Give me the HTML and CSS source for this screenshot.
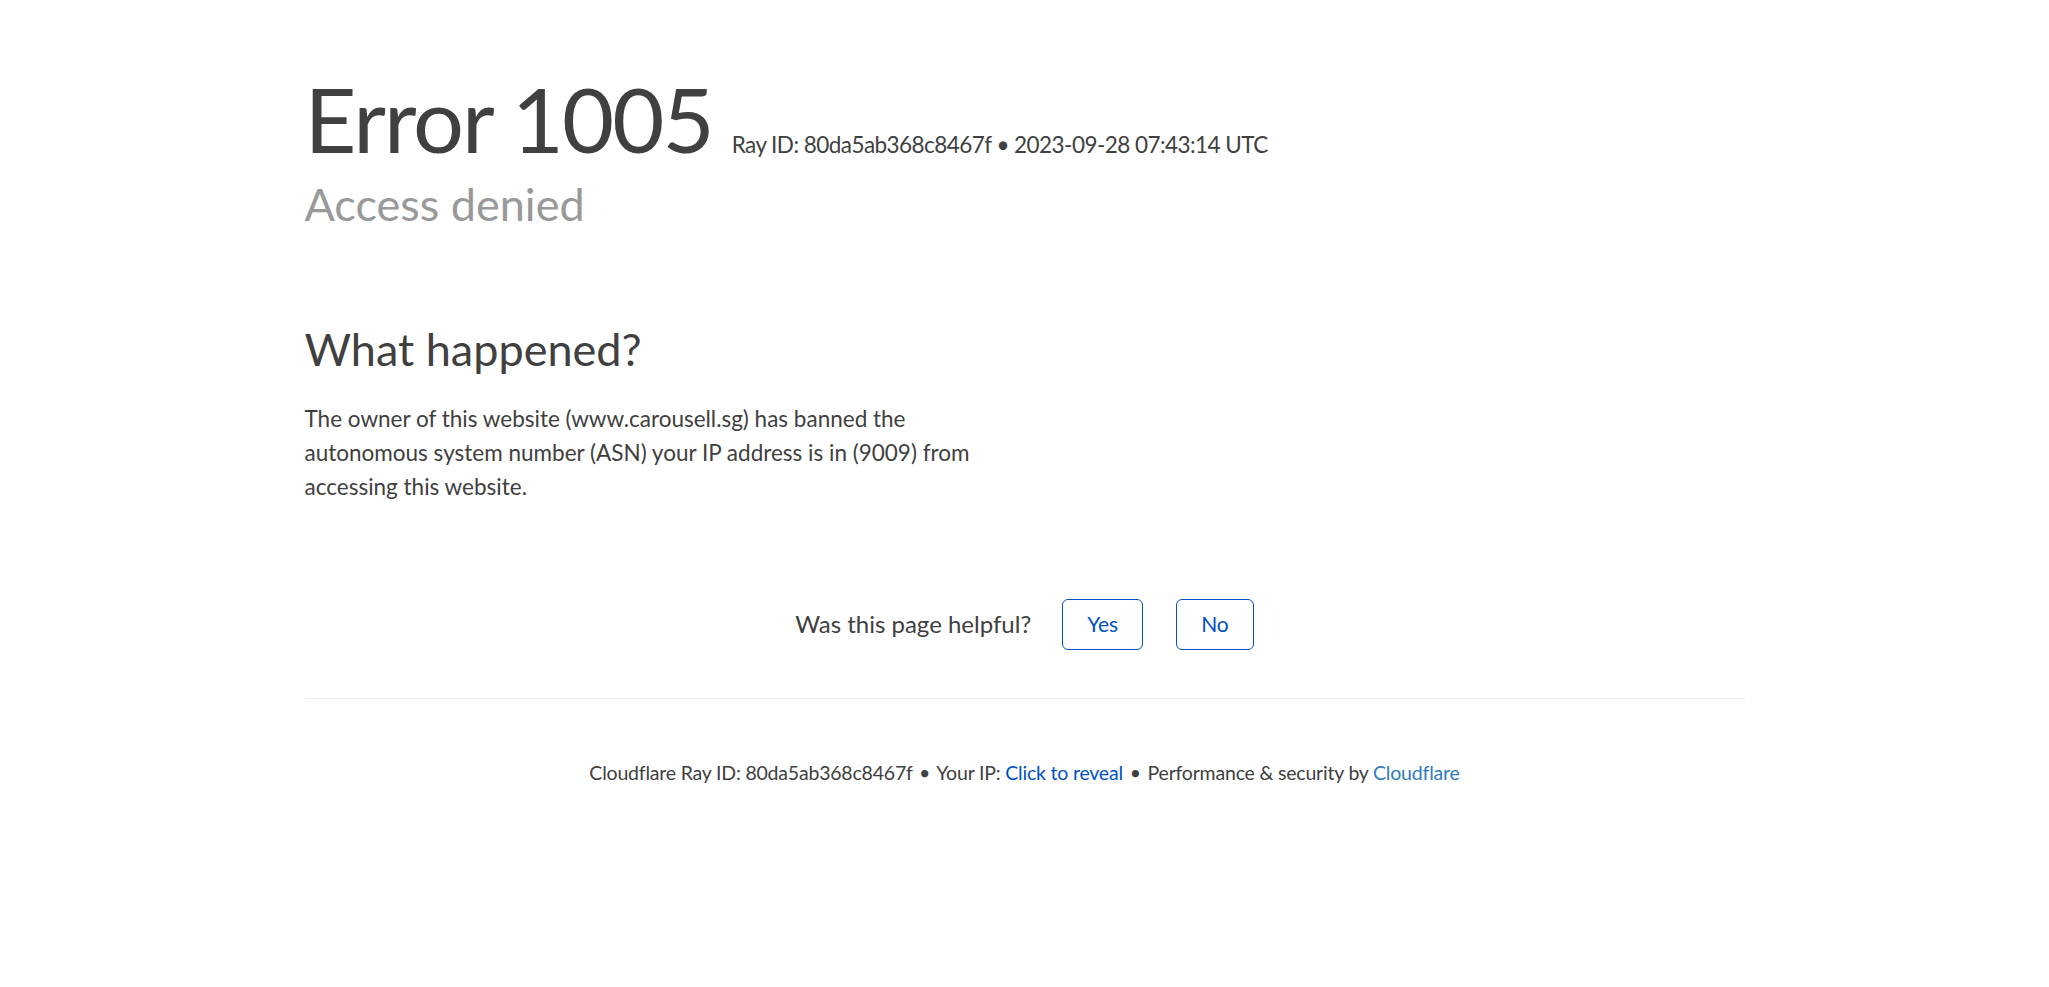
FILE: index.html
```html
<!DOCTYPE html>
<html lang="en">
<head>
<meta charset="utf-8">
<title>Access denied | www.carousell.sg used Cloudflare to restrict access</title>
<link rel="stylesheet" href="styles.css">
</head>
<body>
<div class="page">
  <header class="header">
    <div class="title-row">
      <h1 class="error-title"><span>Error</span> <span>1005</span></h1>
      <span class="ray-id">Ray ID: 80da5ab368c8467f &bull; 2023-09-28 07:43:14 UTC</span>
    </div>
    <h2 class="subheadline">Access denied</h2>
  </header>

  <section class="what-happened">
    <h2 class="section-title">What happened?</h2>
    <p class="section-text">The owner of this website (www.carousell.sg) has banned the autonomous system number (ASN) your IP address is in (9009) from accessing this website.</p>
  </section>

  <div class="feedback">
    <span class="feedback-label">Was this page helpful?</span>
    <div class="feedback-buttons">
      <button class="feedback-button" type="button">Yes</button>
      <button class="feedback-button" type="button">No</button>
    </div>
  </div>

  <footer class="footer">
    <span>Cloudflare Ray ID: <strong class="ray-strong">80da5ab368c8467f</strong></span>
    <span class="sep">&bull;</span>
    <span>Your IP: <a class="reveal-link" href="#">Click to reveal</a></span>
    <span class="sep">&bull;</span>
    <span>Performance &amp; security by <a class="cf-link" href="#">Cloudflare</a></span>
  </footer>
</div>
</body>
</html>
```

FILE: styles.css
```css
html, body {
  margin: 0;
  padding: 0;
  background: #ffffff;
}

body {
  font-family: "Lato", "Open Sans", "Liberation Sans", sans-serif;
  color: #404040;
  font-size: 22.5px;
  line-height: 1.5;
}

.page {
  width: 1440px;
  margin: 0 auto;
}

.header {
  padding-top: 62px;
}

.title-row {
  display: flex;
  align-items: baseline;
  gap: 19px;
}

.error-title {
  margin: 0;
  font-size: 90px;
  line-height: 1.25;
  font-weight: 400;
  letter-spacing: -2px;
  color: #404040;
}

.ray-id {
  font-size: 22.5px;
  letter-spacing: -0.55px;
  color: #404040;
}

.subheadline {
  margin: 0;
  font-size: 45px;
  line-height: 1.3;
  font-weight: 400;
  color: #999999;
}

.what-happened {
  margin-top: 88px;
  width: 720px;
}

.section-title {
  margin: 0 0 25px;
  font-size: 45px;
  line-height: 1.25;
  font-weight: 400;
  color: #404040;
}

.section-text {
  margin: 0;
  font-size: 22.5px;
  line-height: 1.5;
}

.feedback {
  padding: 48px 0;
  margin-top: 47px;
  display: flex;
  justify-content: center;
  align-items: center;
  gap: 31px;
}

.feedback-label {
  font-size: 24px;
}

.feedback-buttons {
  display: flex;
  gap: 33px;
}

.feedback-button {
  font-family: inherit;
  font-size: 21px;
  line-height: 24px;
  min-width: 77px;
  height: 51px;
  padding: 12px 24px;
  border: 1.5px solid #0051c3;
  border-radius: 6px;
  background: #ffffff;
  color: #0051c3;
  cursor: pointer;
}

.footer {
  border-top: 1.5px solid #ebebeb;
  padding: 59px 0 60px;
  text-align: center;
  font-size: 19.5px;
  line-height: 1.5;
  letter-spacing: -0.2px;
}

.ray-strong {
  font-weight: 400;
}

.sep {
  margin: 0 2px;
}

.reveal-link {
  color: #0051c3;
  text-decoration: none;
}

.cf-link {
  color: #2f7bbf;
  text-decoration: none;
}
```
